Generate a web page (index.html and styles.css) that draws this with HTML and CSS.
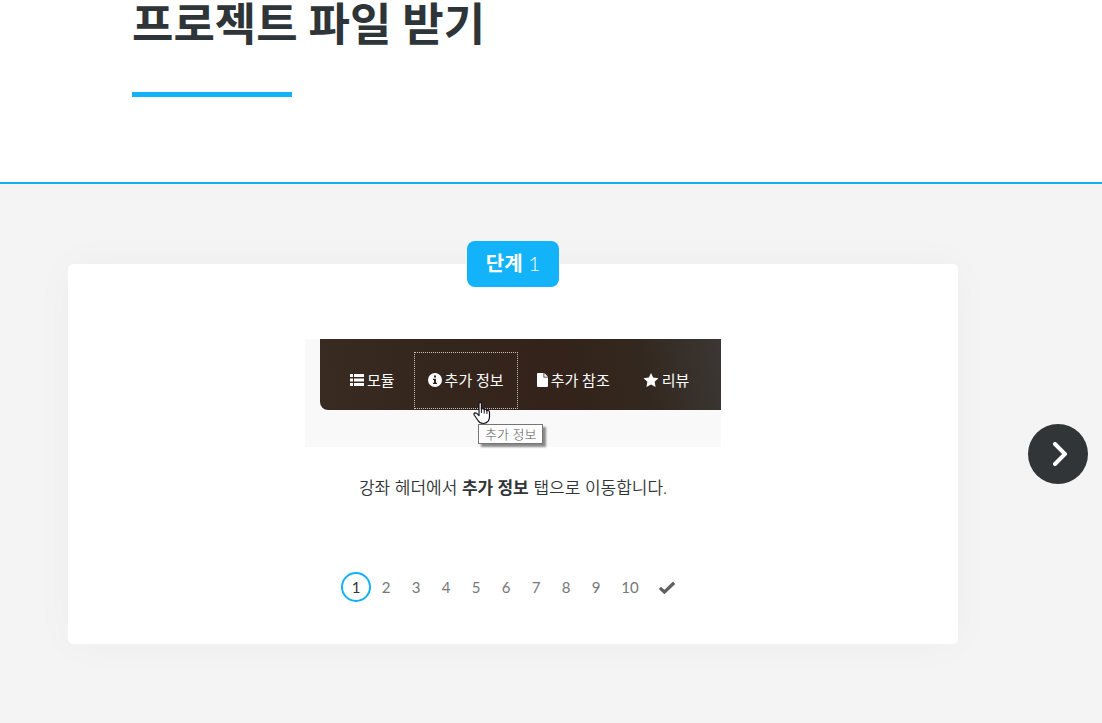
FILE: index.html
```html
<!DOCTYPE html>
<html lang="ko">
<head>
<meta charset="utf-8">
<meta name="viewport" content="width=device-width, initial-scale=1">
<title>프로젝트 파일 받기</title>
<link rel="stylesheet" href="styles.css">
</head>
<body>
<header class="page-header">
  <h1 class="page-title">프로젝트 파일 받기</h1>
  <div class="title-rule"></div>
</header>
<main class="process">
  <section class="step-card">
    <h2 class="step-badge">단계 <span class="step-number">1</span></h2>
    <figure class="shot">
      <div class="course-tabs">
        <a class="course-tab" href="#modules">
          <svg class="tab-icon" viewBox="0 0 14 12"><path d="M0 0h3v3H0zM4 0h10v3H4zM0 4.5h3v3H0zM4 4.5h10v3H4zM0 9h3v3H0zM4 9h10v3H4z"/></svg>모듈</a>
        <a class="course-tab course-tab-focused" href="#info">
          <svg class="tab-icon" viewBox="0 0 14 14"><path fill-rule="evenodd" d="M7 0a7 7 0 1 0 0 14A7 7 0 0 0 7 0zM6 2.5h2v2H6zM5 5.7h3v4h1v1.2H5V9.700h1V6.900H5z"/></svg>추가 정보</a>
        <a class="course-tab" href="#references">
          <svg class="tab-icon tab-icon-file" viewBox="0 0 11 14"><path d="M0 1q0-1 1-1h5.500v4.500H11V13q0 1-1 1H1q-1 0-1-1zM7.300 0L11 3.700H7.300z"/></svg>추가 참조</a>
        <a class="course-tab" href="#reviews">
          <svg class="tab-icon tab-icon-star" viewBox="0 0 16 15"><path d="M8 0l2.300 4.800 5.700.8-4.100 3.800 1 5.600L8 12.300 3.100 15l1-5.600L0 5.600l5.700-.8z"/></svg>리뷰</a>
      </div>
      <svg class="pointer" viewBox="0 0 18 23"><path d="M6 2q1.200-2.200 2.400 0v5.500q2.200-1 2.800.7 2-.7 2.700.9 2.400-.4 2.600 1.600v4.500q0 2.500-1.300 4.500-1.800 2.300-5 2.300-3.400 0-5.200-3L1.200 13.500q-.8-2 1-2.200 1.200 0 2.300 1.400L6 14.200z" fill="#fff" stroke="#14141c" stroke-width="1.200" stroke-linejoin="round"/><path d="M8.400 7v4.500M11.200 8v4M13.900 9v3.500" fill="none" stroke="#14141c"/></svg>
      <span class="tooltip">추가 정보</span>
    </figure>
    <p class="step-text">강좌 헤더에서 <strong>추가 정보</strong> 탭으로 이동합니다.</p>
    <nav class="pager" aria-label="단계">
      <button class="page page-current" aria-current="step">1</button>
      <button class="page">2</button>
      <button class="page">3</button>
      <button class="page">4</button>
      <button class="page">5</button>
      <button class="page">6</button>
      <button class="page">7</button>
      <button class="page">8</button>
      <button class="page">9</button>
      <button class="page page-wide">10</button>
      <button class="page page-done" aria-label="완료"><svg class="check" viewBox="0 0 16 12"><path d="M1.400 6.300L5.600 10.200 14.600 1.600" fill="none" stroke="#606060" stroke-width="3"/></svg></button>
    </nav>
  </section>
  <div class="next-area">
    <button class="next" aria-label="다음"><svg class="chevron" viewBox="0 0 14 24"><path d="M2 2l10 10L2 22" fill="none" stroke="#fff" stroke-width="4" stroke-linecap="round" stroke-linejoin="miter"/></svg></button>
  </div>
</main>
</body>
</html>
```
FILE: styles.css
```css
* {
  box-sizing: border-box;
}

body {
  margin: 0;
  min-height: 100vh;
  display: flex;
  flex-direction: column;
  background: #fff;
  color: #313537;
  font-family: Lato, "Noto Sans CJK KR", sans-serif;
}

.page-header {
  padding: 0 132px 85px;
  border-bottom: 2px solid #12b1f5;
}

.page-title {
  margin: 0;
  font-size: 45px;
  line-height: 48px;
  font-weight: 700;
  color: #2d3538;
}

.title-rule {
  width: 160px;
  height: 5px;
  margin-top: 44px;
  background: #12b3f8;
}

.process {
  flex: 1;
  display: flex;
  align-items: flex-start;
  padding: 80px 0 79px 68px;
  background: #f4f4f4;
}

.step-card {
  position: relative;
  flex: 1;
  display: flex;
  flex-direction: column;
  align-items: center;
  padding: 75px 24px 42px;
  border-radius: 5px;
  background: #fff;
  box-shadow: 0 0 40px rgba(0, 0, 0, 0.03);
}

.step-badge {
  position: absolute;
  top: 0;
  left: 50%;
  transform: translate(-50%, -50%);
  display: flex;
  align-items: center;
  justify-content: center;
  gap: 6px;
  min-width: 92px;
  height: 46px;
  margin: 0;
  padding-bottom: 2px;
  border-radius: 8px;
  background: #12b3f8;
  color: #fff;
  font-size: 20px;
  line-height: 24px;
  white-space: nowrap;
}

.step-number {
  font-weight: 300;
}

.shot {
  position: relative;
  width: 416px;
  height: 108px;
  margin: 0;
  padding-left: 15px;
  background: #f9f9f9;
}

.course-tabs {
  display: flex;
  gap: 5px;
  height: 71px;
  padding: 13px 0 0 16px;
  border-bottom-left-radius: 8px;
  background: linear-gradient(80deg, #3a2b22, #35261d 30%, #33231a 60%, #33281f 80%, #3b3734);
}

.course-tab {
  display: flex;
  align-items: center;
  gap: 3px;
  height: 57px;
  padding: 0 13px 2px;
  border: 1px solid transparent;
  color: #fff;
  font-size: 15px;
  line-height: 20px;
  text-decoration: none;
  white-space: nowrap;
}

.course-tab-focused {
  border: 1px dotted #c8c0ba;
}

.tab-icon {
  width: 14px;
  height: 14px;
  fill: #fff;
}

.tab-icon-file {
  width: 11px;
}

.tab-icon-star {
  width: 16px;
}

.pointer {
  position: absolute;
  left: 168px;
  top: 62px;
  width: 18px;
  height: 24px;
}

.tooltip {
  position: absolute;
  left: 173px;
  top: 85px;
  padding: 0 6px;
  border: 1px solid #767676;
  background: #fff;
  box-shadow: 3px 3px 2px rgba(0, 0, 0, 0.45);
  color: #575757;
  font-size: 13px;
  font-weight: 300;
  line-height: 18px;
  white-space: nowrap;
}

.step-text {
  margin: 28px 0 0;
  font-size: 17px;
  line-height: 26px;
  font-weight: 350;
}

.step-text strong {
  font-weight: 600;
}

.pager {
  display: flex;
  align-items: center;
  margin-top: 71px;
}

.page {
  width: 30px;
  height: 30px;
  padding: 0;
  border: 2px solid transparent;
  border-radius: 15px;
  background: none;
  color: #757778;
  font-family: inherit;
  font-size: 15px;
  line-height: 20px;
}

.page-current {
  border-color: #12b1f5;
  color: #313537;
}

.page-wide {
  width: 38px;
}

.page-done {
  width: 36px;
}

.check {
  display: block;
  width: 18px;
  height: 13px;
  margin: 0 auto;
}

.next-area {
  align-self: stretch;
  display: flex;
  align-items: center;
  justify-content: center;
  flex: 0 0 144px;
  padding-left: 56px;
}

.next {
  display: flex;
  align-items: center;
  justify-content: center;
  width: 60px;
  height: 60px;
  padding: 0 0 0 3px;
  border: 0;
  border-radius: 50%;
  background: #313537;
}

.chevron {
  width: 14px;
  height: 24px;
}
```
